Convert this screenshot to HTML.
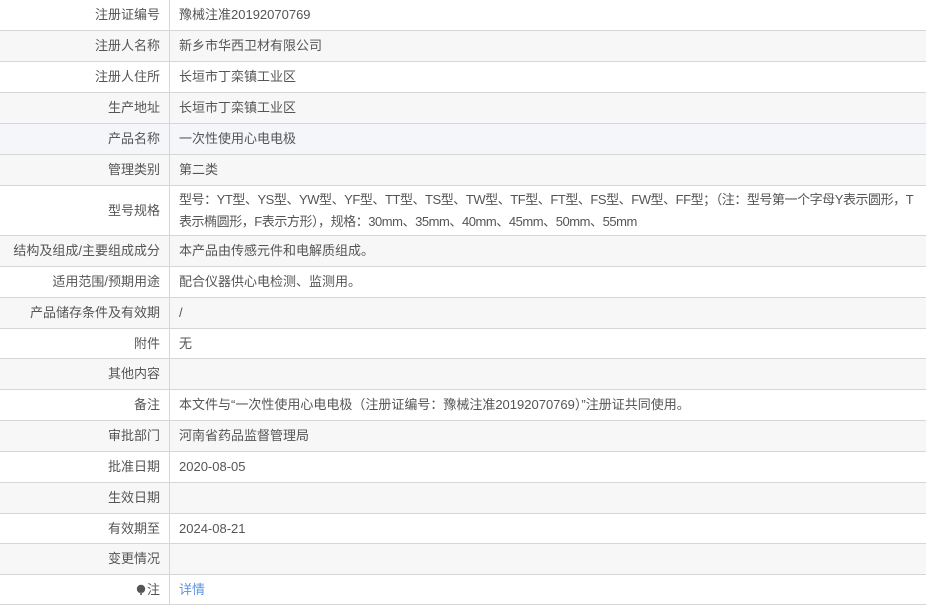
<!DOCTYPE html>
<html><head><meta charset="utf-8"><style>
*{margin:0;padding:0;box-sizing:border-box}
body{width:926px;height:605px;overflow:hidden;background:#fff;font-family:"Liberation Sans","Noto Sans CJK SC",sans-serif;font-size:13px;color:#555}
.r{position:absolute;left:0;width:926px;border-bottom:1px solid #d6d6d6}
.g{background:#f7f7f7}
.h{background:#f4f6fa}
.l{position:absolute;left:0;top:0;bottom:0;width:170px;border-right:1px solid #d6d6d6;text-align:right;padding-right:9px;display:flex;align-items:center;justify-content:flex-end;line-height:16px}
.v{position:absolute;left:179px;top:0;bottom:0;right:0;display:flex;align-items:center}
.v span{display:block;line-height:22px;white-space:nowrap}
a{color:#5b93e6;text-decoration:none}
</style></head><body>
<div class="r" style="top:0;height:31px"><div class="l">注册证编号</div><div class="v"><span>豫械注准20192070769</span></div></div>
<div class="r g" style="top:31px;height:31px"><div class="l">注册人名称</div><div class="v"><span>新乡市华西卫材有限公司</span></div></div>
<div class="r" style="top:62px;height:31px"><div class="l">注册人住所</div><div class="v"><span>长垣市丁栾镇工业区</span></div></div>
<div class="r g" style="top:93px;height:31px"><div class="l">生产地址</div><div class="v"><span>长垣市丁栾镇工业区</span></div></div>
<div class="r h" style="top:124px;height:31px"><div class="l">产品名称</div><div class="v"><span>一次性使用心电电极</span></div></div>
<div class="r g" style="top:155px;height:31px"><div class="l">管理类别</div><div class="v"><span>第二类</span></div></div>
<div class="r" style="top:186px;height:50px"><div class="l">型号规格</div><div class="v"><span style="letter-spacing:-0.45px">型号：YT型、YS型、YW型、YF型、TT型、TS型、TW型、TF型、FT型、FS型、FW型、FF型；（注：型号第一个字母Y表示圆形，T<br>表示椭圆形，F表示方形），规格：30mm、35mm、40mm、45mm、50mm、55mm</span></div></div>
<div class="r g" style="top:236px;height:31px"><div class="l">结构及组成/主要组成成分</div><div class="v"><span>本产品由传感元件和电解质组成。</span></div></div>
<div class="r" style="top:267px;height:31px"><div class="l">适用范围/预期用途</div><div class="v"><span>配合仪器供心电检测、监测用。</span></div></div>
<div class="r g" style="top:298px;height:31px"><div class="l">产品储存条件及有效期</div><div class="v"><span>/</span></div></div>
<div class="r" style="top:329px;height:30px"><div class="l">附件</div><div class="v"><span>无</span></div></div>
<div class="r g" style="top:359px;height:31px"><div class="l">其他内容</div><div class="v"></div></div>
<div class="r" style="top:390px;height:31px"><div class="l">备注</div><div class="v"><span>本文件与“一次性使用心电电极（注册证编号：豫械注准20192070769）”注册证共同使用。</span></div></div>
<div class="r g" style="top:421px;height:31px"><div class="l">审批部门</div><div class="v"><span>河南省药品监督管理局</span></div></div>
<div class="r" style="top:452px;height:31px"><div class="l">批准日期</div><div class="v"><span>2020-08-05</span></div></div>
<div class="r g" style="top:483px;height:31px"><div class="l">生效日期</div><div class="v"></div></div>
<div class="r" style="top:514px;height:30px"><div class="l">有效期至</div><div class="v"><span>2024-08-21</span></div></div>
<div class="r g" style="top:544px;height:31px"><div class="l">变更情况</div><div class="v"></div></div>
<div class="r" style="top:575px;height:30px"><div class="l"><svg width="10" height="12" viewBox="0 0 10 12" style="margin-right:1px"><circle cx="5" cy="5" r="4.2" fill="#555"/><rect x="4" y="8" width="2" height="3" fill="#777"/></svg>注</div><div class="v"><span><a>详情</a></span></div></div>
</body></html>
